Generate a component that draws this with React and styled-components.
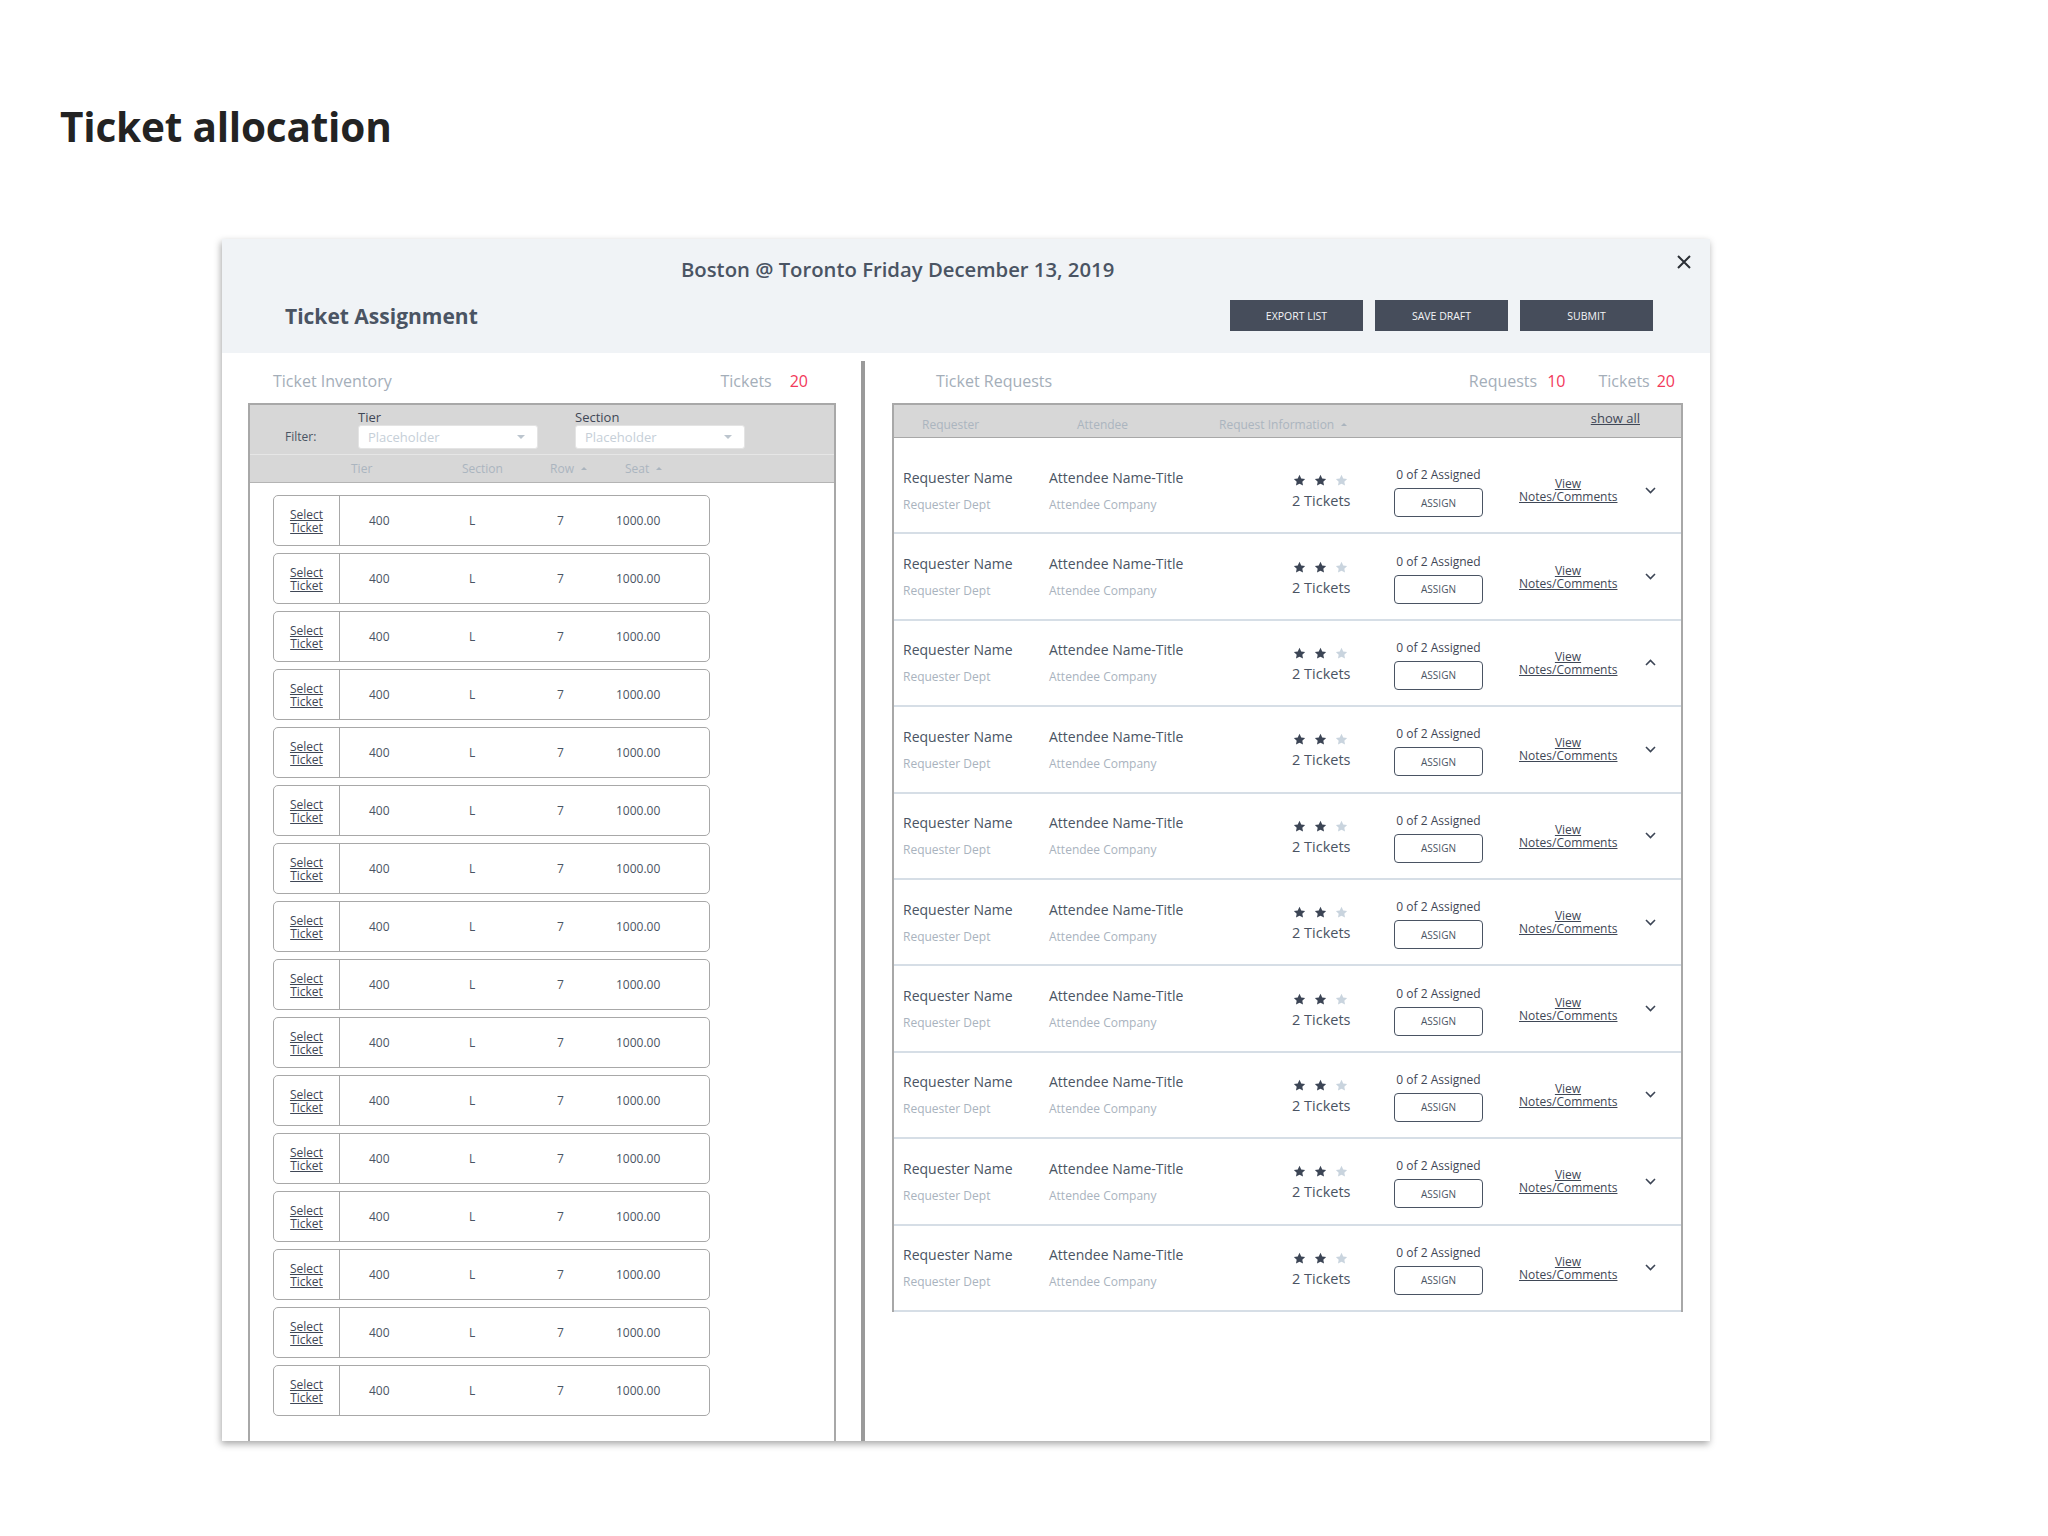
import styled, { createGlobalStyle } from "styled-components"

const GlobalStyle = createGlobalStyle`
  body {
    margin: 0;
    background: #ffffff;
    font-family: "Open Sans", "Noto Sans", sans-serif;
  }
  * { box-sizing: border-box; }
`

const tickets = Array.from({ length: 16 }, (_, i) => ({ id: i, tier: "400", section: "L", row: "7", seat: "1000.00" }))
const requests = Array.from({ length: 10 }, (_, i) => ({ id: i, open: i === 2 }))

function Star({ on }) {
    return (
        <svg width="13" height="13" viewBox="0 0 24 24">
            <path d="M12 1.5l3.2 6.6 7.2 1-5.2 5.1 1.3 7.2L12 18l-6.5 3.4 1.3-7.2L1.6 9.1l7.2-1z" fill={on ? "#3c4555" : "#c9d4de"} />
        </svg>
    )
}

function Chevron({ up }) {
    return (
        <svg width="11" height="7" viewBox="0 0 11 7">
            <path d={up ? "M1 6L5.5 1.5L10 6" : "M1 1L5.5 5.5L10 1"} fill="none" stroke="#3c4555" strokeWidth="1.6" />
        </svg>
    )
}

export default function App() {
    return (
        <Page>
            <GlobalStyle />
            <PageTitle>Ticket allocation</PageTitle>
            <Modal>
                <ModalHeader>
                    <HeadlineRow>
                        <Headline>Boston @ Toronto Friday December 13, 2019</Headline>
                        <CloseButton>
                            <svg width="14" height="14" viewBox="0 0 14 14">
                                <path d="M1 1L13 13M13 1L1 13" stroke="#2b2f36" strokeWidth="2" />
                            </svg>
                        </CloseButton>
                    </HeadlineRow>
                    <ToolbarRow>
                        <SubTitle>Ticket Assignment</SubTitle>
                        <Actions>
                            <DarkButton>Export list</DarkButton>
                            <DarkButton>Save draft</DarkButton>
                            <DarkButton>Submit</DarkButton>
                        </Actions>
                    </ToolbarRow>
                </ModalHeader>

                <ModalBody>
                    <LeftPanel>
                        <PanelHead $left={25} $right={28}>
                            <PanelTitle>Ticket Inventory</PanelTitle>
                            <Counts>
                                <Count>Tickets<Num $gap={18}>20</Num></Count>
                            </Counts>
                        </PanelHead>
                        <InventoryBox>
                            <FilterBar>
                                <FilterLabel>Filter:</FilterLabel>
                                <FieldGroup $gap={37}>
                                    <FieldLabel>Tier</FieldLabel>
                                    <Select $w={180}>Placeholder<SelectCaret /></Select>
                                </FieldGroup>
                                <FieldGroup>
                                    <FieldLabel>Section</FieldLabel>
                                    <Select $w={170}>Placeholder<SelectCaret /></Select>
                                </FieldGroup>
                            </FilterBar>
                            <ColumnBar>
                                <span>Tier</span>
                                <span>Section</span>
                                <span>Row<SortCaret /></span>
                                <span>Seat<SortCaret /></span>
                            </ColumnBar>
                            <TicketList>
                                {tickets.map(t => (
                                    <TicketRow key={t.id}>
                                        <SelectCell>Select<br />Ticket</SelectCell>
                                        <TicketValues>
                                            <span>{t.tier}</span>
                                            <span>{t.section}</span>
                                            <span>{t.row}</span>
                                            <span>{t.seat}</span>
                                        </TicketValues>
                                    </TicketRow>
                                ))}
                            </TicketList>
                        </InventoryBox>
                    </LeftPanel>

                    <Divider />

                    <RightPanel>
                        <PanelHead $left={44} $right={8}>
                            <PanelTitle>Ticket Requests</PanelTitle>
                            <Counts>
                                <Count>Requests<Num $gap={10}>10</Num></Count>
                                <Count>Tickets<Num $gap={7}>20</Num></Count>
                            </Counts>
                        </PanelHead>
                        <RequestBox>
                            <RequestHead>
                                <ColLabel $w={155}>Requester</ColLabel>
                                <ColLabel $w={142}>Attendee</ColLabel>
                                <ColLabel>Request Information<SortCaret /></ColLabel>
                                <ShowAll>show all</ShowAll>
                            </RequestHead>
                            <RequestList>
                                {requests.map(r => (
                                    <RequestRow key={r.id}>
                                        <Person>
                                            <Name>Requester Name</Name>
                                            <Sub>Requester Dept</Sub>
                                        </Person>
                                        <Person>
                                            <Name>Attendee Name-Title</Name>
                                            <Sub>Attendee Company</Sub>
                                        </Person>
                                        <Priority>
                                            <Stars>
                                                <Star on />
                                                <Star on />
                                                <Star />
                                            </Stars>
                                            <TicketCount>2 Tickets</TicketCount>
                                        </Priority>
                                        <AssignCol>
                                            <Assigned>0 of 2 Assigned</Assigned>
                                            <AssignButton>Assign</AssignButton>
                                        </AssignCol>
                                        <NotesLink>View<br />Notes/Comments</NotesLink>
                                        <Toggle><Chevron up={r.open} /></Toggle>
                                    </RequestRow>
                                ))}
                            </RequestList>
                        </RequestBox>
                    </RightPanel>
                </ModalBody>
            </Modal>
        </Page>
    )
}

const Page = styled.div`
padding: 97px 0 80px 0;
`

const PageTitle = styled.h1`
margin: 0 0 0 60px;
font-size: 40.5px;
line-height: 60px;
font-weight: 700;
color: #232323;
letter-spacing: -0.2px;
`

const Modal = styled.div`
margin: 82px 0 0 222px;
width: 1488px;
height: 1202px;
display: flex;
flex-direction: column;
background: #ffffff;
box-shadow: -1px 3px 7px rgba(0, 0, 0, 0.35);
`

const ModalHeader = styled.div`
height: 114px;
background: #f0f3f6;
padding-top: 16px;
`

const HeadlineRow = styled.div`
display: flex;
height: 28px;
`

const Headline = styled.div`
margin-left: 459px;
font-size: 20.3px;
line-height: 28px;
font-weight: 600;
color: #4a5463;
`

const CloseButton = styled.div`
margin-left: auto;
margin-right: 19px;
width: 14px;
height: 14px;
display: flex;
`

const ToolbarRow = styled.div`
margin-top: 17px;
height: 31px;
display: flex;
align-items: center;
padding: 0 57px 0 63px;
`

const SubTitle = styled.div`
font-size: 21px;
font-weight: 700;
color: #4a5463;
`

const Actions = styled.div`
margin-left: auto;
display: flex;
gap: 12px;
`

const DarkButton = styled.div`
width: 133px;
height: 31px;
background: #464d5b;
color: #f4f5f7;
font-size: 10.5px;
text-transform: uppercase;
display: flex;
align-items: center;
justify-content: center;
`

const ModalBody = styled.div`
flex: 1;
display: flex;
min-height: 0;
`

const LeftPanel = styled.div`
width: 639px;
display: flex;
flex-direction: column;
padding: 0 25px 0 26px;
`

const RightPanel = styled.div`
flex: 1;
display: flex;
flex-direction: column;
padding: 0 27px;
`

const Divider = styled.div`
width: 4px;
margin-top: 8px;
background: #9a9a9a;
`

const PanelHead = styled.div`
height: 50px;
display: flex;
justify-content: space-between;
align-items: flex-start;
padding: 17px ${p => p.$right}px 0 ${p => p.$left}px;
`

const PanelTitle = styled.div`
font-size: 16px;
line-height: 22px;
color: #a4aeb9;
`

const Counts = styled.div`
display: flex;
gap: 33px;
`

const Count = styled.div`
font-size: 16px;
line-height: 22px;
color: #a4aeb9;
`

const Num = styled.span`
color: #f2385a;
margin-left: ${p => p.$gap}px;
`

const InventoryBox = styled.div`
flex: 1;
border: 2px solid #a8a8a8;
border-bottom: none;
display: flex;
flex-direction: column;
`

const FilterBar = styled.div`
height: 50px;
background: #d7d7d7;
border-bottom: 1px solid #e6e6e6;
display: flex;
align-items: flex-end;
padding: 0 0 5px 35px;
`

const FilterLabel = styled.div`
width: 73px;
font-size: 12px;
line-height: 24px;
color: #4a5463;
`

const FieldGroup = styled.div`
display: flex;
flex-direction: column;
margin-right: ${p => p.$gap || 0}px;
`

const FieldLabel = styled.div`
font-size: 13px;
line-height: 16px;
color: #3f4756;
`

const Select = styled.div`
width: ${p => p.$w}px;
height: 24px;
background: #ffffff;
border: 1px solid #e4e4e4;
border-radius: 3px;
display: flex;
align-items: center;
padding: 0 12px 0 9px;
font-size: 13px;
color: #c6cfd8;
`

const SelectCaret = styled.span`
margin-left: auto;
width: 0;
height: 0;
border-left: 4px solid transparent;
border-right: 4px solid transparent;
border-top: 4px solid #bcc5ce;
`

const SortCaret = styled.span`
display: inline-block;
vertical-align: middle;
margin-left: 7px;
margin-top: -3px;
width: 0;
height: 0;
border-left: 3px solid transparent;
border-right: 3px solid transparent;
border-bottom: 3px solid #aab4be;
`

const ColumnBar = styled.div`
height: 28px;
background: #d7d7d7;
border-bottom: 1px solid #b4b4b4;
display: grid;
grid-template-columns: 111px 88px 75px auto;
align-items: center;
padding-left: 101px;
font-size: 12px;
color: #abb5bf;
`

const TicketList = styled.div`
display: flex;
flex-direction: column;
gap: 7px;
padding: 12px 0 0 23px;
`

const TicketRow = styled.div`
width: 437px;
height: 51px;
border: 1.5px solid #a8a8a8;
border-radius: 5px;
display: flex;
align-items: center;
`

const SelectCell = styled.div`
width: 66px;
height: 100%;
border-right: 1.5px solid #a8a8a8;
display: flex;
align-items: center;
justify-content: center;
text-align: center;
font-size: 12px;
line-height: 13px;
text-decoration: underline;
color: #3f4756;
`

const TicketValues = styled.div`
flex: 1;
display: grid;
grid-template-columns: 100px 88px 59px auto;
padding-left: 29px;
font-size: 12px;
color: #4a5463;
`

const RequestBox = styled.div`
border: 2px solid #a8a8a8;
border-bottom: none;
display: flex;
flex-direction: column;
`

const RequestHead = styled.div`
height: 33px;
background: #d7d7d7;
border-bottom: 1.5px solid #a8a8a8;
display: flex;
padding: 0 41px 0 28px;
`

const ColLabel = styled.div`
width: ${p => (p.$w ? `${p.$w}px` : "auto")};
padding-top: 12px;
font-size: 12px;
line-height: 16px;
color: #abb5bf;
`

const ShowAll = styled.div`
margin-left: auto;
padding-top: 5px;
font-size: 13px;
line-height: 16px;
color: #3f4756;
text-decoration: underline;
`

const RequestList = styled.div`
padding-top: 10px;
display: flex;
flex-direction: column;
`

const RequestRow = styled.div`
height: 86.4px;
border-bottom: 2px solid #d6dee6;
display: grid;
grid-template-columns: 146px 243px 102px 125px 98px auto;
align-items: center;
padding-left: 9px;
`

const Person = styled.div`
display: flex;
flex-direction: column;
gap: 9px;
`

const Name = styled.div`
font-size: 14px;
line-height: 20px;
color: #4a5463;
`

const Sub = styled.div`
font-size: 12px;
line-height: 16px;
color: #a9b3be;
`

const Priority = styled.div`
display: flex;
flex-direction: column;
gap: 5px;
padding-top: 4px;
`

const Stars = styled.div`
display: flex;
gap: 8px;
padding-left: 1px;
`

const TicketCount = styled.div`
font-size: 14.5px;
line-height: 18px;
color: #4a5463;
`

const AssignCol = styled.div`
width: 89px;
display: flex;
flex-direction: column;
align-items: center;
gap: 5px;
padding-top: 4px;
`

const Assigned = styled.div`
font-size: 12px;
line-height: 16px;
color: #3f4756;
white-space: nowrap;
`

const AssignButton = styled.div`
width: 89px;
height: 29px;
border: 1.5px solid #4a5463;
border-radius: 4px;
display: flex;
align-items: center;
justify-content: center;
font-size: 10px;
text-transform: uppercase;
color: #4a5463;
`

const NotesLink = styled.div`
text-align: center;
font-size: 12px;
line-height: 13px;
color: #3f4756;
text-decoration: underline;
white-space: nowrap;
`

const Toggle = styled.div`
padding-left: 28px;
display: flex;
align-items: center;
`
